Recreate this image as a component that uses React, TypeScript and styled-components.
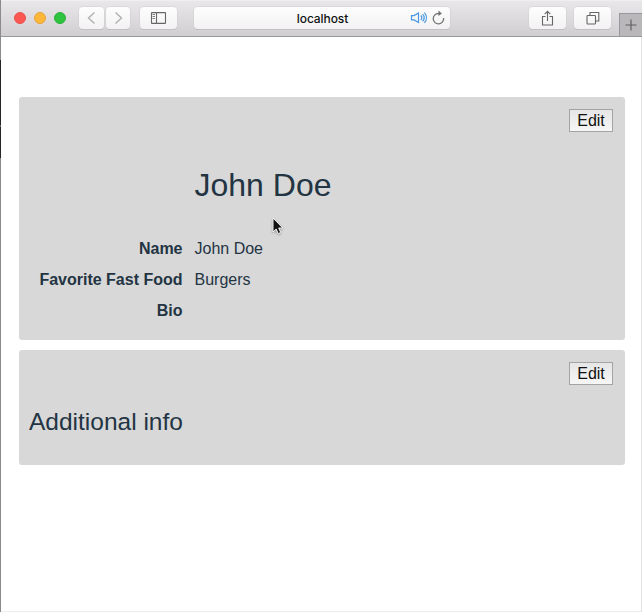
import React from "react";
import styled, { createGlobalStyle } from "styled-components";

const GlobalStyle = createGlobalStyle`
  *, *::before, *::after { box-sizing: border-box; }
  body { margin: 0; background: #fff; overflow: hidden; }
`;

const Window = styled.div`
  position: relative;
  display: flex;
  flex-direction: column;
  width: 642px;
  height: 612px;
  padding-left: 1px;
  background: #fff;
  border-bottom: 1px solid #ededed;
  font-family: "Liberation Sans", Arial, sans-serif;
  color: #233443;
`;

const WindowEdge = styled.div`
  position: absolute;
  left: 0;
  top: 0;
  width: 1px;
  height: 612px;
  background: linear-gradient(#8b8b8d 60px, #252527 60px, #252527 125px, #666 125px, #666 127px, #252527 127px, #252527 158px, #8a8a8c 158px);
`;

const RightEdge = styled(WindowEdge)`
  left: 641px;
  top: 37px;
  height: 575px;
  background: #e3e3e3;
`;

const Toolbar = styled.header`
  display: flex;
  align-items: flex-start;
  height: 37px;
  flex: none;
  padding: 6px 0 0 13px;
  background: linear-gradient(#e9e7e9, #d0ced0);
  border-top: 1px solid #f0eff0;
  border-bottom: 1px solid #96999e;
`;

const Lights = styled.div`
  display: flex;
  gap: 8px;
  margin: 5px 13px 0 0;
`;

const Light = styled.span<{ $fill: string; $ring: string }>`
  width: 12px;
  height: 12px;
  border-radius: 50%;
  background: ${(p) => p.$fill};
  border: 1px solid ${(p) => p.$ring};
`;

const ToolButton = styled.div<{ $width: number; $gap?: number }>`
  display: flex;
  align-items: center;
  justify-content: center;
  width: ${(p) => p.$width}px;
  height: 22px;
  margin-right: ${(p) => p.$gap ?? 0}px;
  border-radius: 4px;
  background: linear-gradient(#fdfdfd, #f3f2f3);
  box-shadow: 0 0 0 0.5px #d0ced0, 0 1px 0.5px #b4b2b4;
`;

const AddressBar = styled(ToolButton)`
  position: relative;
  padding-left: 1px;
  font-family: Inter, sans-serif;
  font-size: 12px;
  font-weight: 500;
  letter-spacing: -0.1px;
  color: #111;
`;

const AddressIcons = styled.div`
  position: absolute;
  right: 5px;
  top: 3px;
  display: flex;
  gap: 4px;
`;

const NewTab = styled.div`
  display: flex;
  align-items: center;
  justify-content: center;
  width: 23px;
  height: 23px;
  margin: 6px 0 0 auto;
  background: #b9b7b9;
  border: solid #99979b;
  border-width: 1px 0 0 1px;
`;

const Page = styled.main`
  display: flex;
  flex-direction: column;
  gap: 10px;
  padding: 60px 17px 0 18px;
`;

const Panel = styled.section<{ $height: number }>`
  display: flex;
  flex-direction: column;
  height: ${(p) => p.$height}px;
  padding: 12px 12px 0 10px;
  border-radius: 3px;
  background: #d8d8d8;
`;

const EditButton = styled.button`
  align-self: flex-end;
  width: 44px;
  height: 23px;
  padding: 0;
  border: 1px solid #a4a4a4;
  background: linear-gradient(#e6e6e6, #f6f6f6);
  font: 16px/20px "Liberation Sans", Arial, sans-serif;
  color: #111;
`;

const Title = styled.h1`
  margin: 35px 0 0 165.5px;
  font-size: 32px;
  line-height: 37px;
  font-weight: 400;
`;

const Subtitle = styled.h2`
  margin: 23px 0 0;
  font-size: 24.5px;
  line-height: 28px;
  font-weight: 400;
`;

const Details = styled.dl`
  display: grid;
  grid-template-columns: 153.5px 1fr;
  column-gap: 12px;
  grid-auto-rows: 31px;
  align-items: center;
  margin: 29px 0 0;
  font-size: 16px;
`;

const Term = styled.dt`
  font-weight: 700;
  text-align: right;
  white-space: nowrap;
`;

const Value = styled.dd`
  margin: 0;
`;

const Pointer = styled.svg`
  position: absolute;
  left: 270px;
  top: 216px;
  filter: drop-shadow(0 1px 1px rgba(0, 0, 0, 0.3));
`;

const Chevron = ({ d }: { d: string }) => (
  <svg width="10" height="14" viewBox="0 0 10 14" fill="none" stroke="#b0b0b0" strokeWidth="1.4">
    <path d={d} />
  </svg>
);

export default function App() {
  return (
    <Window>
      <GlobalStyle />
      <Toolbar>
        <Lights>
          <Light $fill="#fc5753" $ring="#e9504c" />
          <Light $fill="#fdb83a" $ring="#e7a43b" />
          <Light $fill="#2fc43f" $ring="#2bae3b" />
        </Lights>
        <ToolButton $width={25} $gap={2}><Chevron d="M7.500 1.500 1.500 7l6 5.500" /></ToolButton>
        <ToolButton $width={24} $gap={10}><Chevron d="M2.500 1.500 8.500 7l-6 5.500" /></ToolButton>
        <ToolButton $width={37} $gap={17}>
          <svg width="17" height="12" viewBox="0 0 17 12" fill="none" stroke="#666" strokeWidth="1.1">
            <rect x="1.500" y="0.600" width="14" height="10.800" rx="0.5" />
            <path d="M6.500 1v10" />
            <path d="M2.500 2.500h2.500M2.500 4.500h2.500M2.500 6.500h2.500" strokeWidth="0.8" />
          </svg>
        </ToolButton>
        <AddressBar $width={256} $gap={79}>
          localhost
          <AddressIcons>
            <svg width="18" height="16" viewBox="0 0 18 16" fill="none" stroke="#4997e2" strokeWidth="1.2">
              <path d="M1.500 5.600h2.500L8.500 3v9.500L4 9.900H1.500z" />
              <path d="M10.800 5.500c1.300 1.400 1.300 3.200 0 4.600M12.600 4.200c2 2.200 2 5 0 7.200M14.400 2.700c2.700 3 2.700 7.200 0 10.200" />
            </svg>
            <svg width="13" height="16" viewBox="0 0 13 16" fill="none" stroke="#737373" strokeWidth="1.3">
              <path d="M11.600 8a5.200 5.200 0 1 1-5.200-4.500h1.200" />
              <path d="M6.500.4 9.900 3.500 6.500 6z" fill="#737373" stroke="none" />
            </svg>
          </AddressIcons>
        </AddressBar>
        <ToolButton $width={37} $gap={8}>
          <svg width="13" height="17" viewBox="0 0 13 17" fill="none" stroke="#666" strokeWidth="1.1">
            <path d="M4.500 6.500H1.500v8.500h10V6.500h-3M6.500 11V1.500M3.700 4.200l2.800-2.800 2.800 2.800" />
          </svg>
        </ToolButton>
        <ToolButton $width={37}>
          <svg width="14" height="14" viewBox="0 0 14 14" fill="none" stroke="#666" strokeWidth="1.1">
            <rect x="1" y="4.500" width="8.500" height="8.500" rx="0.800" />
            <path d="M4 4.500V1.500h8.800v8.500H9.500" />
          </svg>
        </ToolButton>
        <NewTab>
          <svg width="12" height="12" viewBox="0 0 12 12" stroke="#606062" strokeWidth="1.2">
            <path d="M6 .5v11M.5 6h11" />
          </svg>
        </NewTab>
      </Toolbar>
      <Page>
        <Panel $height={243}>
          <EditButton>Edit</EditButton>
          <Title>John Doe</Title>
          <Details>
            <Term>Name</Term>
            <Value>John Doe</Value>
            <Term>Favorite Fast Food</Term>
            <Value>Burgers</Value>
            <Term>Bio</Term>
            <Value />
          </Details>
        </Panel>
        <Panel $height={115}>
          <EditButton>Edit</EditButton>
          <Subtitle>Additional info</Subtitle>
        </Panel>
      </Page>
      <WindowEdge />
      <RightEdge />
      <Pointer width="15" height="20" viewBox="0 0 15 20">
        <path d="M3 2v14l3.200-3 2 4.600 2.500-1.100-2-4.500h4.100z" fill="#111" stroke="#f4f4f4" strokeWidth="1" />
      </Pointer>
    </Window>
  );
}
